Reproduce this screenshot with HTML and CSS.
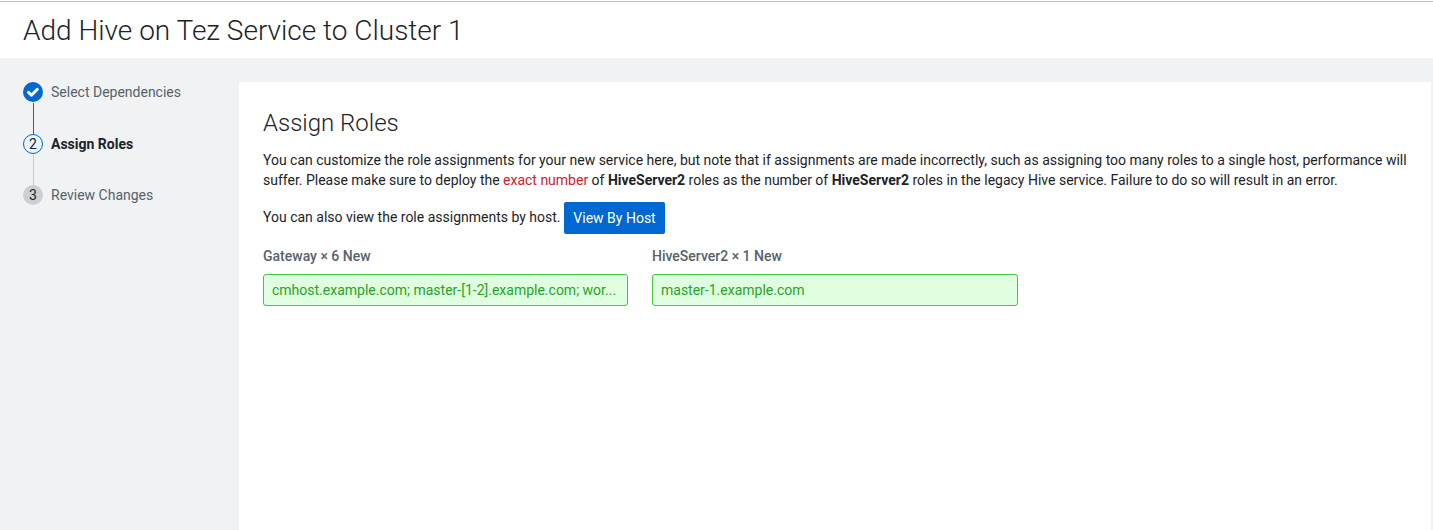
FILE: index.html
```html
<!DOCTYPE html>
<html lang="en">
<head>
<meta charset="utf-8">
<title>Add Hive on Tez Service to Cluster 1</title>
<link rel="stylesheet" href="styles.css">
</head>
<body>
<header class="page-header"><h1>Add Hive on Tez Service to Cluster 1</h1></header>
<div class="wizard">
  <ol class="steps">
    <li class="step done"><span class="marker"><svg viewBox="0 0 20 20"><path d="M5.5 10.3 8.5 13.2 14.3 7.3" fill="none" stroke="#fff" stroke-width="3" stroke-linecap="round" stroke-linejoin="round"/></svg></span><span>Select Dependencies</span></li>
    <li class="step current"><span class="marker">2</span><span>Assign Roles</span></li>
    <li class="step"><span class="marker">3</span><span>Review Changes</span></li>
  </ol>
  <main class="panel">
    <h2>Assign Roles</h2>
    <p class="intro">You can customize the role assignments for your new service here, but note that if assignments are made incorrectly, such as assigning too many roles to a single host, performance will<br>suffer. Please make sure to deploy the <span class="alert">exact number</span> of <b>HiveServer2</b> roles as the number of <b>HiveServer2</b> roles in the legacy Hive service. Failure to do so will result in an error.</p>
    <div class="by-host"><span class="by-host-text">You can also view the role assignments by host.</span><button class="button">View By Host</button></div>
    <div class="roles">
      <section class="role"><h3>Gateway × 6 New</h3><div class="hosts">cmhost.example.com; master-[1-2].example.com; wor...</div></section>
      <section class="role role-wide"><h3>HiveServer2 × 1 New</h3><div class="hosts">master-1.example.com</div></section>
    </div>
  </main>
</div>
</body>
</html>
```
FILE: styles.css
```css
* { box-sizing: border-box; }
body { margin: 0; height: 530px; overflow: hidden; display: flex; flex-direction: column; background: #f0f2f4; color: #1b2329; font: 14px/20px Roboto, sans-serif; }
h1, h2, h3, p, ol { margin: 0; padding: 0; font-weight: 400; }
.page-header { height: 58px; flex: none; background: linear-gradient(#c1c1c1, #c1c1c1) 0 1px / 100% 1px no-repeat #fff; padding: 14px 23px 0; }
h1 { font-size: 28px; line-height: 34px; font-weight: 300; white-space: nowrap; }
.wizard { flex: 1; display: flex; padding: 24px 2px 0 0; }
.steps { width: 239px; flex: none; padding-left: 23px; list-style: none; }
.step { display: flex; gap: 8px; height: 52px; position: relative; color: #56626b; }
.step + .step { height: 51px; }
.step:not(:last-child)::before { content: ""; position: absolute; left: 10px; top: 21px; bottom: 0; width: 1px; background: #c9cccf; }
.step.done::before { background: #0068d0; }
.marker { width: 20px; height: 20px; border-radius: 50%; background: #cdd0d3; color: #1b2329; text-align: center; flex: none; }
.marker svg { display: block; }
.done .marker { background: #0068d0; }
.current .marker { border: 1px solid #0068d0; background: #eaf5ff; line-height: 18px; }
.step.current { color: #1b2329; font-weight: 700; }
.current .marker { font-weight: 400; }
.panel { flex: 1; min-width: 0; background: #fff; padding: 24px; }
h2 { font-size: 24px; line-height: 34px; font-weight: 300; }
.intro { margin-top: 10px; white-space: nowrap; letter-spacing: -0.005px; }
.alert { color: #d0202a; }
.by-host { display: flex; align-items: center; gap: 3px; margin-top: 12px; }
.by-host-text { padding-bottom: 2px; }
.button { font: inherit; height: 32px; width: 101px; padding: 0 0 0 1px; border: 0; border-radius: 2px; background: #0068d0; color: #fff; }
.roles { display: flex; gap: 24px; margin-top: 12px; }
h3 { font-size: 14px; line-height: 20px; font-weight: 500; color: #56626b; }
.role { width: 365px; }
.role-wide { width: 366px; }
.hosts { height: 32px; margin-top: 8px; padding: 5px 8px; border: 1px solid #41c941; border-radius: 3px; background: #e0ffe0; color: #27a327; white-space: nowrap; }
```
